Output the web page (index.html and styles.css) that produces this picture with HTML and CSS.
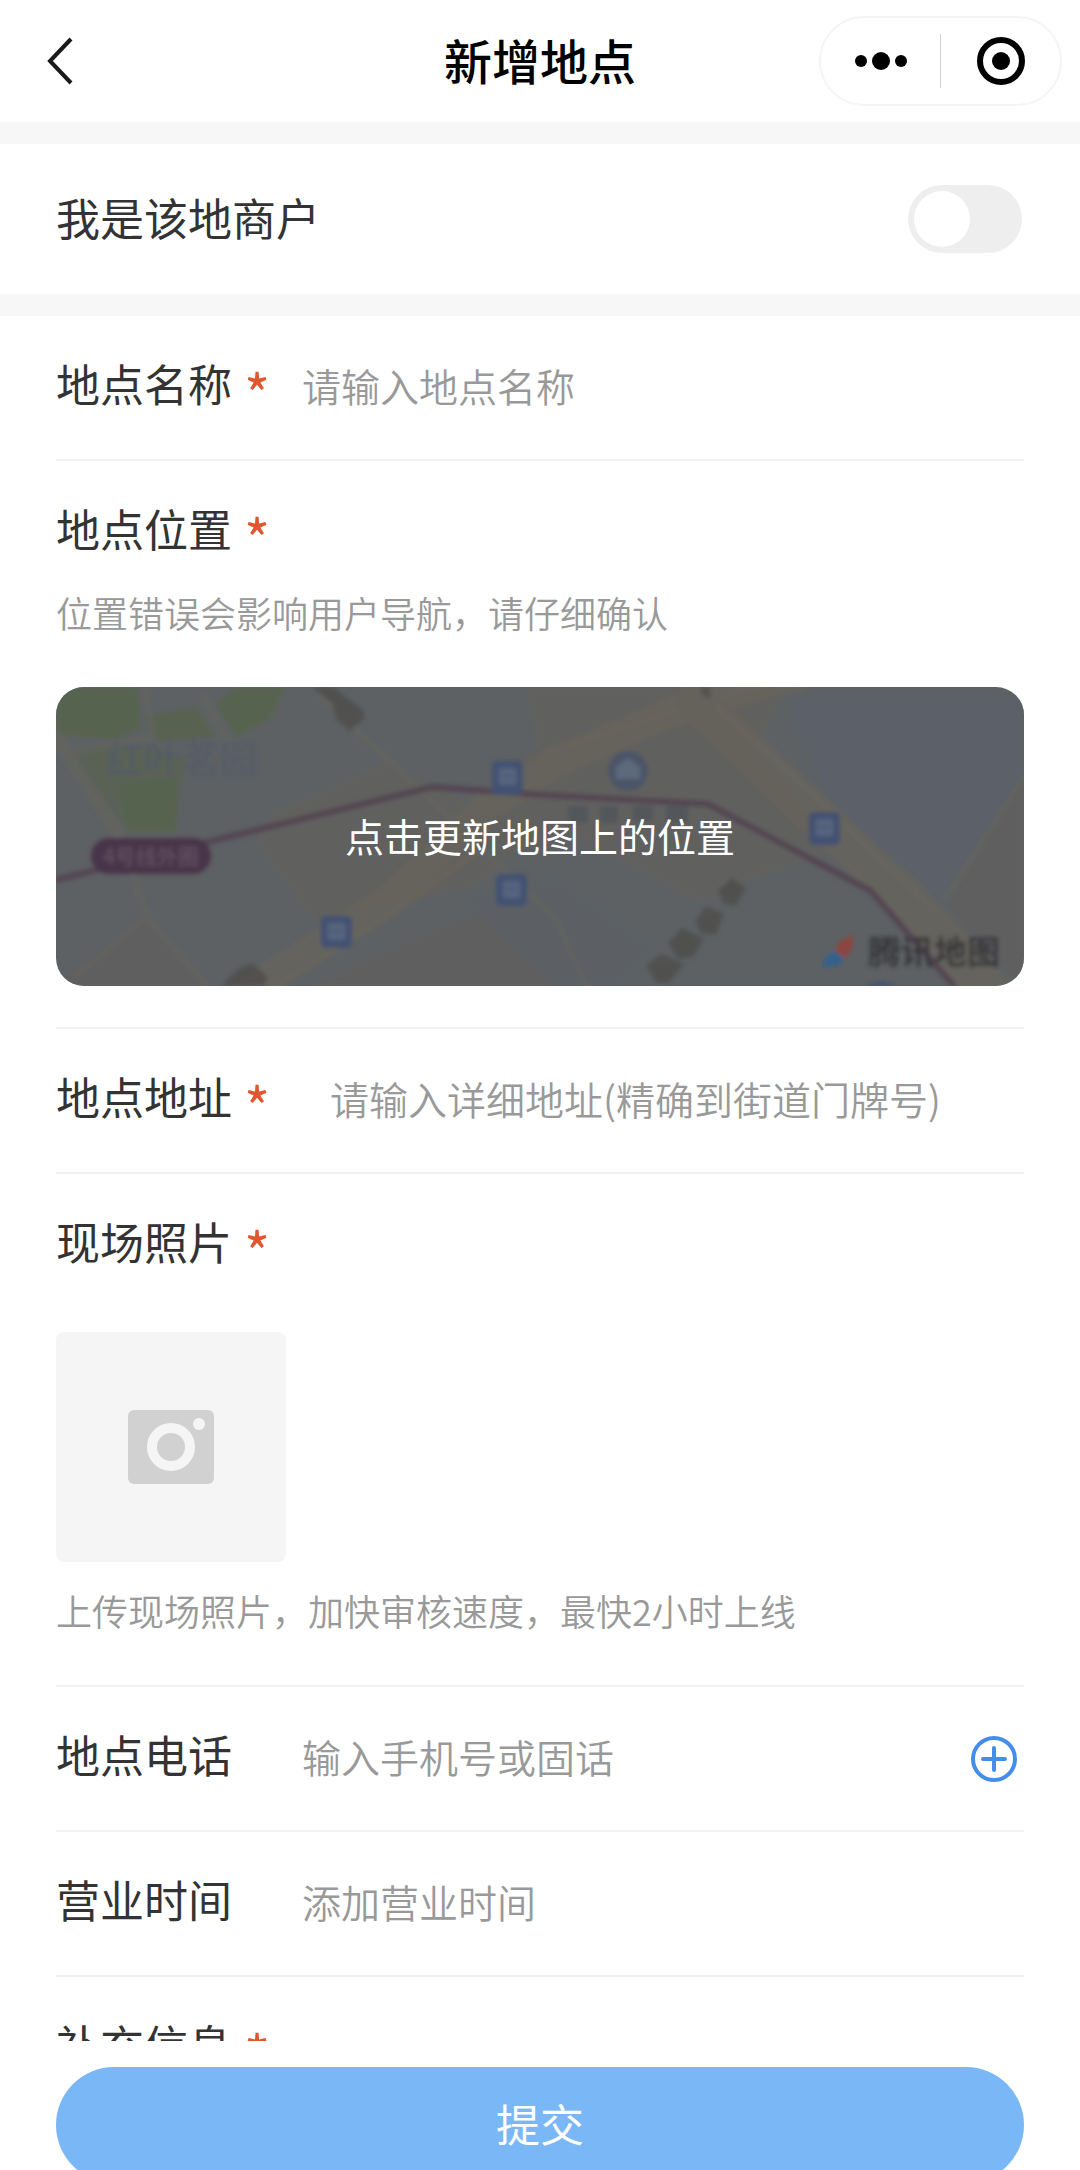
FILE: index.html
```html
<!DOCTYPE html>
<html lang="zh-CN">
<head>
  <meta charset="UTF-8">
  <meta name="viewport" content="width=device-width, initial-scale=1.0">
  <title>新增地点</title>
  <link rel="stylesheet" href="styles.css">
</head>
<body>
  <header class="navbar">
    <button class="back-btn" type="button" aria-label="返回">
      <svg width="28" height="50" viewBox="0 0 28 50" fill="none" stroke="#1a1a1a" stroke-width="4">
        <path d="M25 3 4 25 25 47"/>
      </svg>
    </button>
    <h1 class="title">新增地点</h1>
    <div class="capsule">
      <button class="capsule-btn" type="button" aria-label="更多">
        <svg width="54" height="20" viewBox="0 0 54 20">
          <circle cx="7" cy="10" r="6"/>
          <circle cx="27" cy="10" r="9"/>
          <circle cx="47" cy="10" r="6"/>
        </svg>
      </button>
      <span class="capsule-line"></span>
      <button class="capsule-btn" type="button" aria-label="关闭">
        <svg width="50" height="50" viewBox="0 0 50 50">
          <circle cx="25" cy="25" r="21" fill="none" stroke="#000" stroke-width="6"/>
          <circle cx="25" cy="25" r="9"/>
        </svg>
      </button>
    </div>
  </header>

  <main class="page">
    <section class="merchant">
      <label class="label" for="isMerchant">我是该地商户</label>
      <input class="switch" type="checkbox" role="switch" id="isMerchant">
    </section>

    <form class="form" id="placeForm">
      <div class="row">
        <label class="label" for="placeName">地点名称 <span class="required">*</span></label>
        <input class="field" type="text" id="placeName" placeholder="请输入地点名称">
      </div>

      <div class="block">
        <h2 class="label">地点位置 <span class="required">*</span></h2>
        <p class="hint">位置错误会影响用户导航，请仔细确认</p>
        <button class="map" type="button">
          <svg class="map-img" viewBox="0 0 968 299" preserveAspectRatio="xMidYMid slice" aria-hidden="true">
            <defs>
              <filter id="soft" x="-5%" y="-5%" width="110%" height="110%">
                <feGaussianBlur stdDeviation="2"/>
              </filter>
            </defs>
            <rect width="968" height="299" fill="#5d6164"/>
            <g filter="url(#soft)">
              <!-- 街区 -->
              <path d="M215 125 330 75 400 110 480 145 420 200 260 235 200 160Z" fill="#61605e"/>
              <path d="M470 0H730L700 60 780 160 640 215 520 150 400 130 480 60Z" fill="#61605e"/>
              <path d="M0 299 90 228 150 299Z" fill="#5f5f5f"/>
              <path d="M968 90 890 220 968 299Z" fill="#5f5e5f"/>
              <path d="M250 299 420 225 500 299Z" fill="#605f5f"/>
              <path d="M730 10H968V90L880 225 770 110Z" fill="#5b6167"/>
              <path d="M400 210 500 190 600 260 560 299H500Z" fill="#5b6065"/>
              <!-- 绿地 -->
              <path d="M0 0H82L84 42 60 52 0 48Z" fill="#566450"/>
              <path d="M88 28 140 20 160 50 100 54Z" fill="#586251"/>
              <path d="M160 18 180 0H230L215 32 180 50Z" fill="#566450"/>
              <path d="M20 60 80 58 130 70 120 140H70L20 80Z" fill="#5a6257"/>
              <path d="M64 95 120 92V145H72Z" fill="#566350"/>
              <!-- 道路 -->
              <g fill="none" stroke-linecap="round" stroke-linejoin="round" opacity="0.7">
                <path d="M0 48 60 140 92 232 150 299M92 228 20 290M88 0 98 50 22 64M148 10 172 54M265 10 380 118 440 175 500 232 530 299M968 90 890 210" stroke="#65645f" stroke-width="6"/>
                <path d="M0 50 62 145" stroke="#65645f" stroke-width="13"/>
                <path d="M200 299 330 215 430 120 500 75 640 15 740 -10" stroke="#68655c" stroke-width="30"/>
                <path d="M220 299 330 230 420 165" stroke="#6c6759" stroke-width="6"/>
                <path d="M490 65 640 18 720 -8" stroke="#6b675b" stroke-width="8"/>
                <path d="M640 15 750 120 850 210 930 299" stroke="#68645c" stroke-width="40"/>
                <path d="M660 20 760 110 880 225" stroke="#6b675c" stroke-width="8"/>
              </g>
              <!-- 地铁线 -->
              <path d="M0 193 160 153 376 100 488 108 652 117 815 204 855 250 898 299" fill="none" stroke="#534551" stroke-width="6" stroke-linejoin="round"/>
              <rect x="35" y="151" width="120" height="36" rx="18" fill="#483649"/>
              <text class="map-line" x="95" y="177">4号线外圈</text>
              <text class="map-park" x="50" y="86">红叶茗园</text>
              <!-- 路名 -->
              <g fill="#4e4d4a" opacity="0.8">
                <path d="M256 0H278L288 9 298 18 278 18ZM276 20 290 10 308 24 308 32 294 44 281 33Z"/>
                <path d="M168 296 182 282 196 276 212 290 208 299H168Z"/>
                <path d="M590 278 606 267 628 277 613 296H600ZM612 256 626 241 648 252 637 270 622 272ZM640 233 650 219 668 227 660 248 644 246ZM662 204 676 191 690 201 680 219 668 217Z"/>
                <path d="M645 0H654V12L646 8Z"/>
              </g>
              <path d="M512 119H532V136H512ZM544 119H562V136H544ZM577 119H597V134H577ZM610 119H632V136H610Z" fill="#53575a"/>
              <!-- 公交站 -->
              <g fill="#435172">
                <rect x="436" y="74" width="31" height="34" rx="5"/>
                <rect x="440" y="187" width="31" height="32" rx="5"/>
                <rect x="265" y="229" width="31" height="32" rx="5"/>
                <rect x="753" y="125" width="31" height="33" rx="5"/>
                <path d="M808 299Q824 290 842 299Z"/>
              </g>
              <path d="M443 81H460V98H443ZM447 194H464V211H447ZM272 236H289V253H272ZM760 132H777V149H760Z" fill="#58657f"/>
              <path d="M446 89H457M450 202H461M275 244H286M763 140H774" stroke="#485676" stroke-width="2"/>
              <circle cx="572" cy="84" r="20" fill="#4c5568"/>
              <path d="M560 92V80L572 71 584 80V92Z" fill="#5d697b"/>
              <!-- 地图标志 -->
              <path d="M798 248 796 262 789 272 779 264 784 254Z" fill="#8d4540"/>
              <path d="M779 264 789 272 781 279 766 280 770 270Z" fill="#33608d"/>
              <text class="map-brand" x="812" y="277">腾讯地图</text>
            </g>
          </svg>
          <span class="map-tip">点击更新地图上的位置</span>
        </button>
      </div>

      <div class="row row-wide">
        <label class="label" for="placeAddress">地点地址 <span class="required">*</span></label>
        <input class="field" type="text" id="placeAddress" placeholder="请输入详细地址(精确到街道门牌号)">
      </div>

      <div class="block">
        <h2 class="label">现场照片 <span class="required">*</span></h2>
        <button class="upload" type="button" aria-label="上传现场照片">
          <svg width="86" height="74" viewBox="0 0 86 74">
            <rect width="86" height="74" rx="6" fill="#d1d1d1"/>
            <circle cx="43" cy="37" r="19" fill="none" stroke="#f5f5f5" stroke-width="10"/>
            <circle cx="71" cy="14" r="6" fill="#f5f5f5"/>
          </svg>
        </button>
        <p class="hint">上传现场照片，加快审核速度，最快2小时上线</p>
      </div>

      <div class="row">
        <label class="label" for="placePhone">地点电话</label>
        <input class="field" type="tel" id="placePhone" placeholder="输入手机号或固话">
        <button class="add-btn" type="button" aria-label="添加电话">
          <svg width="48" height="48" viewBox="0 0 48 48" fill="none" stroke="#448de8" stroke-width="4" stroke-linecap="round">
            <circle cx="24" cy="24" r="21"/>
            <path d="M13 24H35M24 13V35"/>
          </svg>
        </button>
      </div>

      <div class="row">
        <label class="label" for="openTime">营业时间</label>
        <input class="field" type="text" id="openTime" placeholder="添加营业时间">
      </div>

      <div class="block">
        <h2 class="label">补充信息 <span class="required">*</span></h2>
      </div>
    </form>
  </main>

  <footer class="footer">
    <button class="submit-btn" type="submit" form="placeForm">提交</button>
  </footer>
</body>
</html>
```

FILE: styles.css
```css
:root {
  --text: #333;
  --muted: #999;
  --line: #f2f2f2;
  --band: #f7f7f7;
  --red: #e0562f;
  --blue: #7ab7f7;
  --gutter: 56px;
}

* {
  box-sizing: border-box;
}

body {
  margin: 0;
  height: 100vh;
  display: flex;
  flex-direction: column;
  overflow: hidden;
  background-color: #fff;
  color: var(--text);
  font-family: "Noto Sans CJK SC", sans-serif;
}

button {
  padding: 0;
  border: none;
  background: none;
  font-family: inherit;
  cursor: pointer;
}

h1, h2, p {
  margin: 0;
}

svg {
  display: block;
}

/* 顶部导航 */
.navbar {
  flex: none;
  display: grid;
  grid-template-columns: 1fr auto 1fr;
  align-items: center;
  height: 122px;
  padding: 0 18px;
}

.back-btn {
  justify-self: start;
  margin-left: 28px;
}

.title {
  padding-bottom: 4px;
  color: #000;
  font-size: 48px;
  font-weight: 500;
  line-height: 60px;
}

.capsule {
  justify-self: end;
  display: flex;
  align-items: center;
  width: 243px;
  height: 90px;
  border: 2px solid #f5f5f5;
  border-radius: 45px;
}

.capsule-btn {
  flex: 1;
  display: flex;
  justify-content: center;
}

.capsule-line {
  width: 1px;
  height: 54px;
  background-color: #d5d5d5;
}

/* 内容 */
.page {
  flex: 1;
  min-height: 0;
  overflow: hidden;
}

.merchant {
  display: flex;
  align-items: center;
  justify-content: space-between;
  padding: 41px 58px 41px var(--gutter);
  border-top: 22px solid var(--band);
  border-bottom: 22px solid var(--band);
}

.merchant .label {
  padding-bottom: 4px;
}

.label {
  display: flex;
  align-items: flex-start;
  gap: 12px;
  font-size: 44px;
  font-weight: 400;
  line-height: 60px;
}

.required {
  height: 60px;
  color: var(--red);
  font-size: 56px;
  line-height: 78px;
}

.switch {
  appearance: none;
  width: 114px;
  height: 68px;
  margin: 0;
  padding: 6px;
  border-radius: 34px;
  background-color: #eee;
}

.switch::before {
  content: "";
  display: block;
  width: 56px;
  height: 56px;
  border-radius: 50%;
  background-color: #fff;
}

.switch:checked {
  background-color: var(--blue);
}

.switch:checked::before {
  margin-left: auto;
}

.form {
  padding: 0 var(--gutter);
}

.row, .block {
  padding-top: 37px;
  border-bottom: 2px solid var(--line);
}

.row {
  display: grid;
  grid-template-columns: 246px 1fr auto;
  align-items: baseline;
  padding-bottom: 44px;
}

.row-wide {
  grid-template-columns: 274px 1fr;
}

.block {
  padding-bottom: 41px;
}

.field {
  width: 100%;
  height: 60px;
  padding: 0;
  border: none;
  outline: none;
  background: none;
  color: var(--text);
  font-family: inherit;
  font-size: 39px;
  font-weight: 350;
}

.field::placeholder {
  color: var(--muted);
  opacity: 1;
}

.hint {
  color: var(--muted);
  font-size: 36px;
  font-weight: 350;
  line-height: 50px;
}

.label + .hint {
  margin-top: 29px;
}

.map {
  display: grid;
  width: 100%;
  height: 299px;
  margin-top: 50px;
  border-radius: 28px;
  overflow: hidden;
}

.map-img, .map-tip {
  grid-area: 1 / 1;
}

.map-img {
  width: 100%;
  height: 299px;
}

/* 文字叠在地图上 */
.map-tip {
  z-index: 1;
  place-self: center;
  padding-bottom: 4px;
  color: #fff;
  font-size: 39px;
  line-height: 50px;
}

.map-line {
  fill: #675567;
  font-size: 21px;
  text-anchor: middle;
}

.map-park {
  fill: #525b68;
  font-size: 38px;
}

.map-brand {
  fill: #38393b;
  font-size: 33px;
  font-weight: 700;
}

.upload {
  display: flex;
  align-items: center;
  justify-content: center;
  width: 230px;
  height: 230px;
  margin-top: 61px;
  margin-bottom: 23px;
  border-radius: 8px;
  background-color: #f5f5f5;
}

.upload + .hint {
  padding-bottom: 9px;
}

.add-btn {
  align-self: center;
  margin-top: 8px;
  margin-right: 6px;
}

/* 底部提交 */
.footer {
  flex: none;
  height: 129px;
  padding: 26px var(--gutter) 0;
  overflow: hidden;
}

.submit-btn {
  width: 100%;
  height: 116px;
  padding-bottom: 4px;
  border-radius: 58px;
  background-color: var(--blue);
  color: #fff;
  font-size: 44px;
}
```
